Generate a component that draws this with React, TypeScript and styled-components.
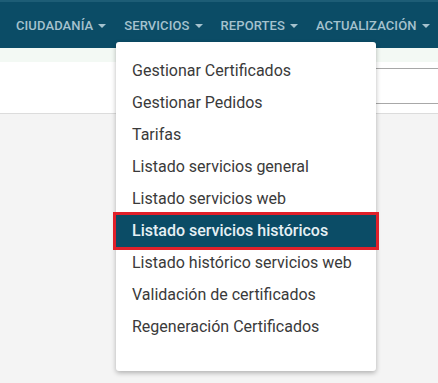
import styled, { createGlobalStyle } from "styled-components";

const GlobalStyle = createGlobalStyle`
  html, body {
    margin: 0;
    padding: 0;
    background: #f4f4f4;
    font-family: Roboto, "Liberation Sans", sans-serif;
  }
`;

const Page = styled.div`
  position: relative;
  width: 438px;
  height: 383px;
  overflow: hidden;
  background: #f4f4f4;
`;

const NavBar = styled.nav`
  height: 46px;
  background: #0b4c66;
  border-top: 2px solid #1d5d76;
  display: flex;
  align-items: center;
  gap: 18px;
  padding-left: 16px;
  white-space: nowrap;
`;

const NavItem = styled.div`
  display: flex;
  align-items: center;
  gap: 5px;
  font-size: 13px;
  font-weight: 500;
  color: #a5c2ce;
  text-transform: uppercase;
  letter-spacing: 0.1px;
`;

const Caret = styled.span`
  width: 0;
  height: 0;
  border-left: 4px solid transparent;
  border-right: 4px solid transparent;
  border-top: 4px solid #a5c2ce;
  margin-top: 1px;
`;

const SubStrip = styled.div`
  height: 14px;
  background: #f3f9f4;
`;

const ToolBar = styled.div`
  height: 51px;
  background: #fff;
  border-bottom: 1px solid #dcdcdc;
  display: flex;
  justify-content: flex-end;
  align-items: center;
`;

const SearchBox = styled.div`
  width: 62px;
  height: 34px;
  border-top: 1px solid #a8a8a8;
  border-bottom: 1px solid #a8a8a8;
  margin-bottom: 4px;
`;

const Menu = styled.ul`
  position: absolute;
  left: 116px;
  top: 42px;
  width: 260px;
  margin: 0;
  padding: 13px 0 28px;
  list-style: none;
  background: #fff;
  border-radius: 3px;
  box-shadow: 0 2px 5px rgba(0, 0, 0, 0.28);
`;

const MenuItem = styled.li<{ $active?: boolean }>`
  position: relative;
  height: 32px;
  line-height: 32px;
  padding-left: 16px;
  font-size: 16px;
  font-weight: ${p => (p.$active ? 500 : 400)};
  color: ${p => (p.$active ? "#e6f0f4" : "#3a3a3a")};
  background: ${p => (p.$active ? "#0b4c66" : "transparent")};
  outline: ${p => (p.$active ? "3px solid #e0202a" : "none")};
  outline-offset: 0;
  white-space: nowrap;
`;

const navItems = ["Ciudadanía", "Servicios", "Reportes", "Actualización"];

const menuItems = [
  "Gestionar Certificados",
  "Gestionar Pedidos",
  "Tarifas",
  "Listado servicios general",
  "Listado servicios web",
  "Listado servicios históricos",
  "Listado histórico servicios web",
  "Validación de certificados",
  "Regeneración Certificados"
];

export default function App() {
  return (
    <Page>
      <GlobalStyle />
      <NavBar>
        {navItems.map(item => (
          <NavItem key={item}>
            {item}
            <Caret />
          </NavItem>
        ))}
      </NavBar>
      <SubStrip />
      <ToolBar>
        <SearchBox />
      </ToolBar>
      <Menu>
        {menuItems.map(item => (
          <MenuItem key={item} $active={item === "Listado servicios históricos"}>
            {item}
          </MenuItem>
        ))}
      </Menu>
    </Page>
  );
}
